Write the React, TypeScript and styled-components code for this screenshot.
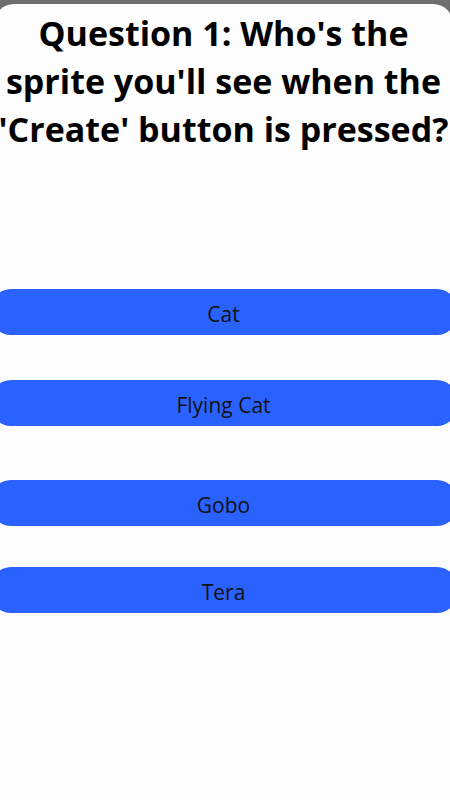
import React from "react";
import styled, { createGlobalStyle } from "styled-components";

const GlobalStyle = createGlobalStyle`
  html, body {
    margin: 0;
    padding: 0;
    background: #6e6e6e;
    overflow: hidden;
  }
  #root {
    height: 100vh;
  }
`;

const answers = [
  { label: "Cat", gap: 0 },
  { label: "Flying Cat", gap: 45 },
  { label: "Gobo", gap: 54 },
  { label: "Tera", gap: 41 },
];

export default function App() {
  return (
    <>
      <GlobalStyle />
      <Screen>
        <Card>
          <Title>
            Question 1: Who's the
            <br />
            sprite you'll see when the
            <br />
            'Create' button is pressed?
          </Title>
          <Answers>
            {answers.map((a) => (
              <AnswerButton key={a.label} $gap={a.gap}>
                {a.label}
              </AnswerButton>
            ))}
          </Answers>
        </Card>
      </Screen>
    </>
  );
}

const Screen = styled.div`
  height: 100vh;
  padding-top: 4px;
  box-sizing: border-box;
  display: flex;
  flex-direction: column;
  overflow: hidden;
`;

const Card = styled.div`
  flex: 1;
  margin-left: -6px;
  width: 459px;
  background: #fdfdfd;
  border-radius: 20px 20px 0 0;
  display: flex;
  flex-direction: column;
  align-items: center;
  font-family: "Open Sans", "Noto Sans", sans-serif;
  color: #000;
`;

const Title = styled.h1`
  margin: 0;
  padding-top: 5px;
  width: 100%;
  text-align: center;
  white-space: nowrap;
  font-size: 34px;
  font-weight: 700;
  line-height: 48px;
`;

const Answers = styled.div`
  margin-top: 136px;
  display: flex;
  flex-direction: column;
  align-items: center;
  width: 100%;
`;

const AnswerButton = styled.button<{ $gap: number }>`
  all: unset;
  box-sizing: border-box;
  margin-top: ${(p) => p.$gap}px;
  width: 466px;
  height: 46px;
  padding-top: 3px;
  border-radius: 20px;
  background: #2962ff;
  color: #111;
  font-family: "Open Sans", "Noto Sans", sans-serif;
  font-size: 21px;
  display: flex;
  align-items: center;
  justify-content: center;
  cursor: pointer;
`;
